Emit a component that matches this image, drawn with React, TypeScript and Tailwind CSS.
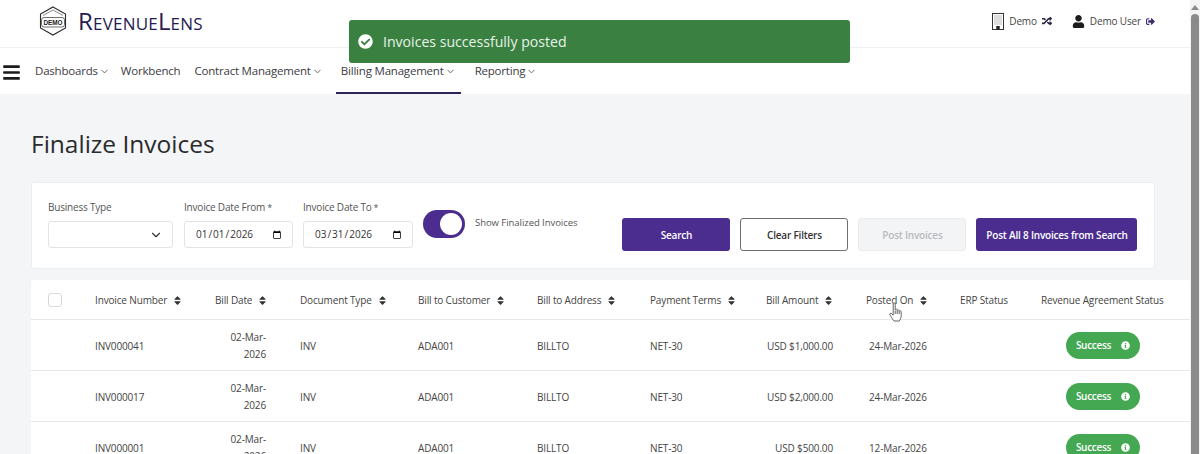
import { ChevronDown } from 'lucide-react';
import {
  FaBars,
  FaCheckCircle,
  FaInfoCircle,
  FaRandom,
  FaSignOutAlt,
  FaSort,
  FaUser,
} from 'react-icons/fa';

const navItems = [
  { label: 'Dashboards', caret: true, offset: '' },
  { label: 'Workbench', caret: false, offset: '-ml-[3px]' },
  { label: 'Contract Management', caret: true, offset: '' },
  { label: 'Billing Management', caret: true, active: true, offset: 'ml-[4px]' },
  { label: 'Reporting', caret: true, offset: 'ml-[5px]' },
];

const invoices = [
  { number: 'INV000041', amount: 'USD $1,000.00', posted: '24-Mar-2026' },
  { number: 'INV000017', amount: 'USD $2,000.00', posted: '24-Mar-2026' },
  { number: 'INV000001', amount: 'USD $500.00', posted: '12-Mar-2026' },
];

const gridCols =
  'grid grid-cols-[64px_120px_85px_118px_119px_113px_116px_100px_94px_81px_149px] items-center';

function Logo() {
  return (
    <svg width="28" height="30" viewBox="0 0 28 30" className="shrink-0">
      <path d="M14 1 L26.5 8 V22 L14 29 L1.5 22 V8 Z" fill="none" stroke="#2b2b2b" strokeWidth="1.1" />
      <path d="M14 4 L24 9.5" fill="none" stroke="#555" strokeWidth="0.7" />
      <path d="M14 4 L4 9.5" fill="none" stroke="#555" strokeWidth="0.7" />
      <rect x="2.5" y="11.5" width="23" height="9.5" rx="2.5" fill="#fff" stroke="#333" strokeWidth="0.7" />
      <text x="14" y="18.6" textAnchor="middle" fontSize="6.4" fontWeight="700" fontFamily="Liberation Sans" fill="#222">
        DEMO
      </text>
    </svg>
  );
}

function BuildingIcon() {
  return (
    <svg width="12" height="17" viewBox="0 0 12 17" className="shrink-0">
      <rect x="0.5" y="0.5" width="11" height="16" fill="#fff" stroke="#333" />
      <path d="M2.5 3h7M2.500 5h7M2.500 7h7M2.500 9h7M2.500 11h7" stroke="#777" strokeWidth="1" strokeDasharray="1 1" />
      <rect x="4.3" y="13" width="3.4" height="3.5" fill="#222" />
    </svg>
  );
}

function HandCursor() {
  return (
    <svg width="14" height="20" viewBox="0 0 14 20" className="absolute left-[889px] top-[302px]">
      <path
        d="M4.2 1.8c0-1.2 2-1.2 2 0v6c.2-1 1.9-1 2 0v.8c.2-1 1.8-1 2 .1v.7c.3-.9 2-.7 2 .5v3.600c0 2.500-1.300 4.500-2 5.500H5c-1-1.500-2.800-4-4-6-.8-1.300.6-2.500 1.700-1.300l1.500 1.500z"
        fill="#fff"
        stroke="#555"
        strokeWidth="0.9"
      />
      <path d="M6.200 8.500v3.500M8.200 9v3M10.200 9.500v2.500" stroke="#333" strokeWidth="0.8" />
    </svg>
  );
}

function SortHeader({ label }: { label: string }) {
  return (
    <div className="flex items-center gap-[5px] whitespace-nowrap">
      <span>{label}</span>
      <FaSort className="text-[11px] text-[#333]" />
    </div>
  );
}

function Field({
  label,
  required,
  children,
  width,
}: {
  label: string;
  required?: boolean;
  children: React.ReactNode;
  width: string;
}) {
  return (
    <div className={`flex flex-col ${width}`}>
      <label className="mb-[6px] h-[15px] text-[10px] leading-[15px] tracking-[-0.2px] whitespace-nowrap text-[#555]">
        {label}
        {required && <span className="ml-[2px] text-[9px]">*</span>}
      </label>
      {children}
    </div>
  );
}

function DateBox({ value }: { value: string }) {
  return (
    <input
      type="date"
      defaultValue={value}
      className="h-[27px] w-full rounded-[3px] border border-[#e2e3e6] bg-white pr-[8px] pl-[10px] text-[10px] text-[#333]"
    />
  );
}

export default function App() {
  return (
    <div className="relative flex h-[454px] w-[1200px] overflow-hidden bg-white font-['Open_Sans','Noto_Sans',sans-serif] text-[#3f3f46]">
      <main className="flex min-w-0 flex-1 flex-col">
        <header className="flex h-[48px] shrink-0 items-center justify-between border-b border-[#f0f0f2] pr-[35px] pb-[5px] pl-[39px] shadow-[0_1px_2px_rgba(0,0,0,0.03)]">
          <div className="flex items-center gap-[11px]">
            <Logo />
            <span className="text-[24px] leading-none font-medium tracking-[0.2px] text-[#261a52] [font-variant-caps:small-caps]">
              RevenueLens
            </span>
          </div>
          <div className="flex items-center gap-[20px] text-[10px] tracking-[-0.15px] text-[#444]">
            <div className="flex items-center gap-[5px]">
              <BuildingIcon />
              <span>Demo</span>
              <FaRandom className="text-[10px] text-[#2a2440]" />
            </div>
            <div className="flex items-center gap-[5px]">
              <FaUser className="text-[13px] text-[#1c1c1c]" />
              <span>Demo User</span>
              <FaSignOutAlt className="text-[9px] text-[#3a2b70]" />
            </div>
          </div>
        </header>

        <nav className="flex h-[46px] shrink-0 items-stretch bg-white pl-[2px] text-[11.5px] tracking-[-0.2px] text-[#3b3b3f]">
          <div className="mr-[9px] flex items-center pt-[2px]">
            <FaBars className="text-[19px] text-[#1c1c1c]" />
          </div>
          <div className="flex gap-[4px]">
            {navItems.map(item => (
              <a
                key={item.label}
                href="#"
                className={`flex items-center border-b-2 px-[5px] pt-[2px] whitespace-nowrap ${item.offset} ${
                  item.active ? 'border-[#2c2159]' : 'border-transparent'
                }`}
              >
                {item.label}
                {item.caret && <ChevronDown size={11} strokeWidth={1.7} className="ml-[1px] text-[#444]" />}
              </a>
            ))}
          </div>
        </nav>

        <section className="flex min-h-0 flex-1 flex-col bg-[#f4f5f7] pt-[32px]">
          <h1 className="ml-[31px] text-[24.5px] leading-[36px] font-medium text-[#2b2b2e]">Finalize Invoices</h1>

          <div className="mt-[20px] mr-[35px] ml-[31px] flex h-[87px] shrink-0 rounded-[3px] border border-[#eceef0] bg-white pt-[17px] pl-[16px]">
            <div className="flex">
              <Field label="Business Type" width="w-[125px] mr-[11px]">
                <div className="flex h-[27px] items-center justify-end rounded-[3px] border border-[#e2e3e6] pr-[9px]">
                  <ChevronDown size={14} strokeWidth={2} className="text-[#333]" />
                </div>
              </Field>
              <Field label="Invoice Date From" required width="w-[109px] mr-[10px]">
                <DateBox value="2026-01-01" />
              </Field>
              <Field label="Invoice Date To" required width="w-[110px]">
                <DateBox value="2026-03-31" />
              </Field>
            </div>
            <div className="mt-[9px] ml-[10px] flex h-[30px] items-center self-start">
              <div className="flex h-[28px] w-[42px] items-center justify-end rounded-full bg-[#4a2d8f] pr-[3px]">
                <div className="h-[22px] w-[22px] rounded-full bg-white" />
              </div>
              <span className="ml-[10px] pb-[2px] text-[9.5px] tracking-[-0.05px] whitespace-nowrap text-[#555]">
                Show Finalized Invoices
              </span>
            </div>
            <div className="mt-[18px] ml-[45px] flex h-[33px] gap-[10px] self-start text-[10px] font-semibold tracking-[-0.2px]">
              <button className="w-[108px] rounded-[3px] bg-[#4a2d8f] pt-[1px] text-white">Search</button>
              <button className="w-[108px] rounded-[3px] border border-[#6f6f73] bg-white pt-[1px] text-[#333]">
                Clear Filters
              </button>
              <button className="w-[108px] rounded-[3px] border border-[#ececee] bg-[#f3f4f6] pt-[1px] text-[#b9babd]">
                Post Invoices
              </button>
              <button className="w-[161px] rounded-[3px] bg-[#4a2d8f] pt-[1px] whitespace-nowrap text-white">
                Post All 8 Invoices from Search
              </button>
            </div>
          </div>

          <div className="mt-[11px] ml-[31px] flex-1 rounded-t-[3px] bg-white text-[10px] tracking-[-0.15px] text-[#444]">
            <div className={`${gridCols} h-[40px] border-b border-[#e7e8ea] pt-[2px]`}>
              <div className="-mt-[2px] pl-[17px]">
                <div className="h-[14px] w-[14px] rounded-[3px] border border-[#d8d9dc] bg-white" />
              </div>
              <SortHeader label="Invoice Number" />
              <SortHeader label="Bill Date" />
              <SortHeader label="Document Type" />
              <SortHeader label="Bill to Customer" />
              <SortHeader label="Bill to Address" />
              <SortHeader label="Payment Terms" />
              <SortHeader label="Bill Amount" />
              <SortHeader label="Posted On" />
              <div className="whitespace-nowrap">ERP Status</div>
              <div className="whitespace-nowrap">Revenue Agreement Status</div>
            </div>
            {invoices.map(row => (
              <div key={row.number} className={`${gridCols} h-[51px] border-b border-[#e7e8ea] pt-[2px]`}>
                <div />
                <div>{row.number}</div>
                <div className="pr-[34px] text-right leading-[17px]">
                  02-Mar-
                  <br />
                  2026
                </div>
                <div>INV</div>
                <div>ADA001</div>
                <div>BILLTO</div>
                <div>NET-30</div>
                <div className="pr-[33px] text-right whitespace-nowrap">{row.amount}</div>
                <div className="pl-[3px] whitespace-nowrap">{row.posted}</div>
                <div />
                <div className="-mt-[2px] pl-[25px]">
                  <span className="flex h-[27px] w-[74px] items-center justify-center gap-[10px] rounded-full bg-[#43a851] pt-[1px] text-[10px] font-semibold tracking-[-0.3px] text-white">
                    Success
                    <FaInfoCircle className="text-[9px]" />
                  </span>
                </div>
              </div>
            ))}
          </div>
        </section>
      </main>

      <aside className="flex w-[10px] shrink-0 flex-col items-center bg-[#f3f3f4]">
        <div className="mt-[5px] h-0 w-0 border-x-[4px] border-b-[5px] border-x-transparent border-b-[#8a8a8a]" />
        <div className="mt-[4px] h-[440px] w-[8px] rounded-t-[4px] bg-[#8b8b8b]" />
      </aside>

      <div className="absolute top-[20px] left-[349px] flex h-[43px] w-[501px] items-center gap-[10px] rounded-[3px] bg-[#3a8040] pl-[9px] text-[14.1px] text-[#e8f3e9]">
        <FaCheckCircle className="text-[15px] text-white" />
        Invoices successfully posted
      </div>
      <HandCursor />
    </div>
  );
}
